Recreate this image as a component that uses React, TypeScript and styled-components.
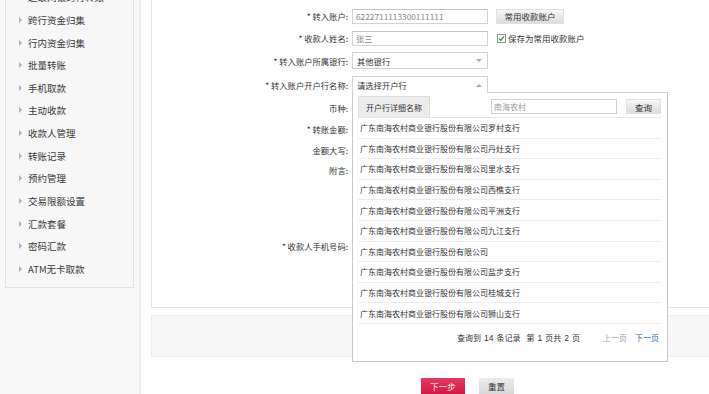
import React from "react";
import styled, { createGlobalStyle } from "styled-components";

const Global = createGlobalStyle`
  html, body { margin: 0; padding: 0; background: #fff; }
  body {
    font-family: "Noto Sans CJK SC", "Noto Sans", sans-serif;
    color: #333;
    overflow: hidden;
  }
  * { box-sizing: border-box; }
`;

const Page = styled.div`
  display: flex;
  width: 709px;
  height: 394px;
  overflow: hidden;
`;

const Sidebar = styled.aside`
  flex: none;
  width: 141px;
  background: #f8f8f8;
  border-right: 2px solid #ebebeb;
  padding: 0 5px;
`;

const MenuBox = styled.ul`
  list-style: none;
  margin: -14px 0 0;
  padding: 0 0 7px;
  background: #f7f7f7;
  border: 1px solid #e2e2e2;
  border-top: none;
`;

const MenuItem = styled.li`
  display: flex;
  align-items: center;
  gap: 6px;
  height: 22.64px;
  padding-left: 13px;
  font-size: 9.5px;
  color: #3a3a3a;
  white-space: nowrap;
`;

const Arrow = styled.span`
  width: 0;
  height: 0;
  border-left: 3px solid #b0b0b0;
  border-top: 3px solid transparent;
  border-bottom: 3px solid transparent;
`;

const Main = styled.main`
  flex: 1;
  display: flex;
  flex-direction: column;
  padding-left: 10px;
  min-width: 0;
`;

const Panel = styled.section`
  height: 311px;
  margin-right: -30px;
  border: 1px solid #e6e6e6;
  border-top: none;
  padding-top: 5px;
  display: flex;
  flex-direction: column;
`;

const Row = styled.div<{ $h: number; $top?: boolean }>`
  display: grid;
  grid-template-columns: 200px 1fr;
  height: ${(p) => p.$h}px;
  align-items: ${(p) => (p.$top ? "start" : "center")};
`;

const Label = styled.label<{ $pt?: number }>`
  text-align: right;
  padding-right: 4px;
  padding-top: ${(p) => p.$pt ?? 0}px;
  font-size: 8.3px;
  line-height: 10px;
  color: #333;
  white-space: nowrap;
`;

const Field = styled.div`
  display: flex;
  align-items: center;
  position: relative;
`;

const TextInput = styled.div`
  width: 136px;
  height: 15px;
  border: 1px solid #d3d3d3;
  border-top-color: #c4c4c4;
  padding: 0 3px;
  font-size: 8.3px;
  line-height: 13px;
  color: #888;
  background: #fff;
`;

const GrayButton = styled.button<{ $w: number; $ml?: number }>`
  width: ${(p) => p.$w}px;
  height: 15px;
  margin-left: ${(p) => p.$ml ?? 0}px;
  padding: 0;
  border: 1px solid #e0e0e0;
  background: linear-gradient(#f7f7f7, #dcdcdc);
  font-family: inherit;
  font-size: 8.5px;
  color: #333;
`;

const CheckLabel = styled.span`
  display: flex;
  align-items: center;
  gap: 2px;
  margin-left: 9px;
  font-size: 8.5px;
  color: #333;
`;

const CheckBox = styled.span`
  display: inline-flex;
  align-items: center;
  justify-content: center;
  width: 9px;
  height: 9px;
  border: 1px solid #8a9a8a;
  background: #fff;
`;

const Select = styled.div<{ $open?: boolean; $h: number }>`
  position: relative;
  z-index: 3;
  display: flex;
  align-items: center;
  justify-content: space-between;
  width: 136px;
  height: ${(p) => p.$h}px;
  padding: 0 5px 0 4px;
  border: 1px solid #d3d3d3;
  border-bottom: ${(p) => (p.$open ? "none" : "1px solid #d3d3d3")};
  background: #fff;
  font-size: 8.3px;
  color: #333;
`;

const Caret = styled.span<{ $up?: boolean }>`
  width: 0;
  height: 0;
  border-left: 3px solid transparent;
  border-right: 3px solid transparent;
  ${(p) =>
    p.$up ? "border-bottom: 3px solid #a8a8a8;" : "border-top: 3px solid #a8a8a8;"}
`;

const Dropdown = styled.div`
  position: absolute;
  left: 0;
  top: 16px;
  z-index: 2;
  width: 316px;
  height: 270px;
  border: 1px solid #c9c9c9;
  background: #fff;
  padding: 3px 6px 0 5px;
  display: flex;
  flex-direction: column;
`;

const DropHeader = styled.div`
  display: flex;
  align-items: center;
  height: 22px;
  border-bottom: 1px solid #e6e6e6;
`;

const Tab = styled.div`
  align-self: flex-start;
  width: 72px;
  height: 21px;
  display: flex;
  align-items: center;
  justify-content: center;
  background: #ececec;
  border: 1px solid #dcdcdc;
  border-bottom: none;
  font-size: 8px;
  color: #333;
`;

const SearchInput = styled.input`
  width: 126px;
  height: 15px;
  margin-left: 61px;
  padding: 0 2px;
  border: 1px solid #cfcfcf;
  font-family: inherit;
  font-size: 8px;
  color: #999;
  outline: none;
  &::placeholder { color: #999; }
`;

const BankList = styled.ul`
  list-style: none;
  margin: 0;
  padding: 0;
`;

const BankItem = styled.li`
  height: 20.6px;
  display: flex;
  align-items: center;
  padding-left: 2px;
  border-bottom: 1px solid #ebebeb;
  font-size: 8px;
  color: #333;
  white-space: nowrap;
`;

const Pager = styled.div`
  display: flex;
  justify-content: flex-end;
  align-items: center;
  gap: 3px;
  height: 28px;
  padding-right: 2px;
  font-size: 8px;
  color: #333;
  white-space: nowrap;
`;

const Num = styled.span`
  font-family: "Liberation Sans", Arial, sans-serif;
  font-size: 8.5px;
`;

const PagerText = styled.span<{ $ml?: number }>`
  margin-left: ${(p) => p.$ml ?? 0}px;
`;

const PagerLink = styled.span<{ $active?: boolean; $ml: number }>`
  margin-left: ${(p) => p.$ml}px;
  color: ${(p) => (p.$active ? "#2a6db5" : "#9a9a9a")};
`;

const FooterBar = styled.div`
  height: 42px;
  margin-top: 7px;
  margin-right: -30px;
  background: #f7f7f7;
  border: 1px solid #ededed;
`;

const Actions = styled.div`
  display: flex;
  gap: 14px;
  margin-top: 21px;
  padding-left: 270px;
`;

const ActionButton = styled.button<{ $primary?: boolean; $w: number }>`
  width: ${(p) => p.$w}px;
  height: 16px;
  padding: 0;
  border: none;
  font-family: inherit;
  font-size: 8.5px;
  color: ${(p) => (p.$primary ? "#fff" : "#333")};
  background: ${(p) =>
    p.$primary ? "linear-gradient(#e43a60, #d41845)" : "linear-gradient(#ececec, #d8d8d8)"};
`;

const menu = [
  "超级网银跨行转账",
  "跨行资金归集",
  "行内资金归集",
  "批量转账",
  "手机取款",
  "主动收款",
  "收款人管理",
  "转账记录",
  "预约管理",
  "交易限额设置",
  "汇款套餐",
  "密码汇款",
  "ATM无卡取款",
];

const prefix = "广东南海农村商业银行股份有限公司";
const branches = [
  "罗村支行",
  "丹灶支行",
  "里水支行",
  "西樵支行",
  "平洲支行",
  "九江支行",
  "",
  "盐步支行",
  "桂城支行",
  "狮山支行",
];

export default function App() {
  return (
    <>
      <Global />
      <Page>
        <Sidebar>
          <MenuBox>
            {menu.map((m) => (
              <MenuItem key={m}>
                <Arrow />
                {m}
              </MenuItem>
            ))}
          </MenuBox>
        </Sidebar>
        <Main>
          <Panel>
            <Row $h={22}>
              <Label>* 转入账户:</Label>
              <Field>
                <TextInput>6222711113300111111</TextInput>
                <GrayButton $w={68} $ml={8}>常用收款账户</GrayButton>
              </Field>
            </Row>
            <Row $h={22}>
              <Label>* 收款人姓名:</Label>
              <Field>
                <TextInput>张三</TextInput>
                <CheckLabel>
                  <CheckBox>
                    <svg width="7" height="7" viewBox="0 0 7 7">
                      <polyline points="1,3.6 2.8,5.4 6,1.4" fill="none" stroke="#3c8d3c" strokeWidth="1.3" />
                    </svg>
                  </CheckBox>
                  保存为常用收款账户
                </CheckLabel>
              </Field>
            </Row>
            <Row $h={23}>
              <Label>* 转入账户所属银行:</Label>
              <Field>
                <Select $h={17}>
                  其他银行
                  <Caret />
                </Select>
              </Field>
            </Row>
            <Row $h={25}>
              <Label>* 转入账户开户行名称:</Label>
              <Field>
                <Select $open $h={17}>
                  请选择开户行
                  <Caret $up />
                </Select>
                <Dropdown>
                  <DropHeader>
                    <Tab>开户行详细名称</Tab>
                    <SearchInput placeholder="南海农村" readOnly />
                    <GrayButton $w={35} $ml={9}>查询</GrayButton>
                  </DropHeader>
                  <BankList>
                    {branches.map((b, i) => (
                      <BankItem key={i}>{prefix + b}</BankItem>
                    ))}
                  </BankList>
                  <Pager>
                    <PagerText>查询到</PagerText>
                    <Num>14</Num>
                    <PagerText>条记录</PagerText>
                    <PagerText $ml={3}>第</PagerText>
                    <Num>1</Num>
                    <PagerText>页共</PagerText>
                    <Num>2</Num>
                    <PagerText>页</PagerText>
                    <PagerLink $ml={20}>上一页</PagerLink>
                    <PagerLink $ml={5} $active>下一页</PagerLink>
                  </Pager>
                </Dropdown>
              </Field>
            </Row>
            <Row $h={21}>
              <Label>币种:</Label>
            </Row>
            <Row $h={21}>
              <Label>* 转账金额:</Label>
            </Row>
            <Row $h={21}>
              <Label>金额大写:</Label>
            </Row>
            <Row $h={75} $top>
              <Label $pt={5}>附言:</Label>
            </Row>
            <Row $h={22}>
              <Label>* 收款人手机号码:</Label>
            </Row>
          </Panel>
          <FooterBar />
          <Actions>
            <ActionButton $primary $w={44}>下一步</ActionButton>
            <ActionButton $w={35}>重置</ActionButton>
          </Actions>
        </Main>
      </Page>
    </>
  );
}
